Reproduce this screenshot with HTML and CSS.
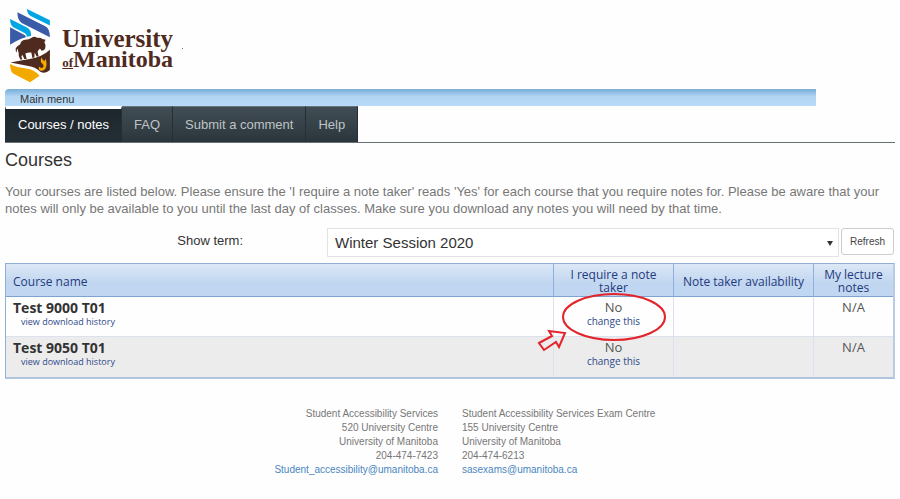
FILE: index.html
```html
<!DOCTYPE html>
<html lang="en">
<head>
    <meta charset="UTF-8">
    <meta name="viewport" content="width=device-width, initial-scale=1.0">
    <title>Courses</title>
    <link rel="stylesheet" href="styles.css">
</head>
<body>
<header class="site-header">
    <svg class="crest" viewBox="28 24 126 226" aria-hidden="true">
        <path fill="#00a5e3" d="M82 27 L151 61 V77 L93 48 Q82 42 82 27Z M31 57 L82 83 Q96 91 94 108 L81 111 Q82 104 76 100 L41 82 Q31 75 31 57Z"/>
        <path fill="#3a5ba8" d="M53 37 L137 79 Q151 86 151 112 L66 69 Q53 61 53 37Z M31 82 L76 106 Q80 109 77 113 Q56 118 31 135Z"/>
        <path fill="#4f2a1e" d="M62 179 Q55 168 57 160 L53 146 Q50 152 52 158 Q46 154 48 145 Q53 137 61 134 Q65 121 76 120 Q88 120 96 114 Q104 108 112 114 Q121 112 130 118 L137 119 V124 L134 126 Q139 134 137 145 Q133 154 126 153 L121 146 Q115 151 114 156 L117 170 H111 L105 158 L104 174 H98 L95 158 Q84 157 77 161 L81 178 H74 L68 165 L65 171 L68 179Z"/>
        <path fill="#4f2a1e" d="M32 188 Q59 184 90 178 Q127 172 151 150 V211 Q137 224 122 216 Q109 203 86 199 Q60 193 32 188Z"/>
        <path fill="#f2a900" d="M31 193 Q52 204 79 206 Q104 209 120 228 L91 248 L40 221 Q31 215 31 193Z M126 173 Q130 185 136 182 L138 176 Q144 195 138 206 Q131 216 121 212 Q115 209 119 200 Q126 208 131 202 Q134 197 126 190 Q121 183 126 173Z"/>
    </svg>
    <div class="wordmark">
        <span class="wordmark-top">University</span>
        <span><small>of</small>Manitoba</span>
    </div>
    <span class="dot"></span>
</header>

<div class="menu-bar">Main menu</div>
<nav class="tabs">
    <a href="#" class="active">Courses / notes</a>
    <a href="#">FAQ</a>
    <a href="#">Submit a comment</a>
    <a href="#">Help</a>
</nav>

<main>
    <h1>Courses</h1>
    <p class="intro">Your courses are listed below. Please ensure the 'I require a note taker' reads 'Yes' for each course that you require notes for. Please be aware that your notes will only be available to you until the last day of classes. Make sure you download any notes you will need by that time.</p>

    <form class="term-form">
        <label for="term">Show term:</label>
        <div class="select-wrap">
            <select id="term" name="term">
                <option>Winter Session 2020</option>
            </select>
        </div>
        <button type="button">Refresh</button>
    </form>

    <table class="courses">
        <colgroup>
            <col>
            <col class="col-taker">
            <col class="col-availability">
            <col class="col-notes">
        </colgroup>
        <thead>
            <tr>
                <th>Course name</th>
                <th>I require a note taker</th>
                <th>Note taker availability</th>
                <th>My lecture notes</th>
            </tr>
        </thead>
        <tbody>
            <tr>
                <td><strong>Test 9000 T01</strong><a href="#" class="history">view download history</a></td>
                <td class="marked">
                    No<a href="#">change this</a>
                    <svg class="callout" width="132" height="62" viewBox="0 0 132 62" aria-hidden="true">
                        <ellipse cx="77" cy="26" rx="51" ry="23"/>
                        <path d="M2 52 L15 45 L12 40 L28 42 L22 56 L19 51 L7 59Z"/>
                    </svg>
                </td>
                <td></td>
                <td>N/A</td>
            </tr>
            <tr>
                <td><strong>Test 9050 T01</strong><a href="#" class="history">view download history</a></td>
                <td>No<a href="#">change this</a></td>
                <td></td>
                <td>N/A</td>
            </tr>
        </tbody>
    </table>
</main>

<footer class="contacts">
    <address>
        Student Accessibility Services<br>
        520 University Centre<br>
        University of Manitoba<br>
        204-474-7423<br>
        <a href="#">Student_accessibility@umanitoba.ca</a>
    </address>
    <address>
        Student Accessibility Services Exam Centre<br>
        155 University Centre<br>
        University of Manitoba<br>
        204-474-6213<br>
        <a href="#">sasexams@umanitoba.ca</a>
    </address>
</footer>
</body>
</html>
```
FILE: styles.css
```css
* {
    box-sizing: border-box;
}

body {
    margin: 0;
    padding: 0 5px;
    background-color: #fefefe;
    color: #333;
    font-family: "Liberation Sans", Arial, sans-serif;
    font-size: 13px;
}

a {
    text-decoration: none;
}

/* Header */
.site-header {
    display: flex;
    padding: 8px 4px 6px;
}

.crest {
    width: 42px;
    height: 75px;
}

.wordmark {
    display: flex;
    flex-direction: column;
    align-items: flex-end;
    margin: 20px 9px 0 11px;
    color: #4f2a1e;
    font-family: "Liberation Serif", "Times New Roman", serif;
    font-size: 24px;
    font-weight: bold;
    line-height: 21px;
}

.wordmark-top {
    font-size: 25px;
}

.wordmark small {
    font-size: 13px;
    text-decoration: underline;
}

.dot {
    width: 1px;
    height: 1px;
    margin-top: 40px;
    background-color: #337ab7;
}

/* Main menu */
.menu-bar {
    margin-right: 79px;
    padding: 4px 15px 0;
    height: 17px;
    border-top-left-radius: 4px;
    background: linear-gradient(#78add6, #b2d5f4 45%, #b8daf8);
    font-size: 11px;
    line-height: 13px;
}

.tabs {
    display: flex;
    border-bottom: 1px solid #66716f;
}

.tabs a {
    padding: 2px 12px;
    border-top: 1px solid #66757c;
    border-right: 1px solid #243036;
    background: linear-gradient(#414d54, #2b363c);
    color: #bfc4c7;
    line-height: 31px;
}

.tabs .active {
    padding-top: 0;
    border-top: 3px solid #fff;
    border-left: 1px solid #243036;
    background: linear-gradient(#1d262c, #242f35);
    color: #fff;
}

/* Content */
h1 {
    margin: 7px 0 12px;
    font-size: 18px;
    font-weight: normal;
    line-height: 21px;
}

.intro {
    margin: 0 0 11px;
    color: #777;
    line-height: 17px;
}

.term-form {
    display: flex;
    align-items: flex-start;
    gap: 2px;
    margin-bottom: 6px;
    padding-right: 1px;
}

.term-form label {
    width: 36%;
    padding: 4px 82px 0 0;
    text-align: right;
    line-height: 17px;
}

.select-wrap {
    position: relative;
    flex: 1;
}

/* dropdown arrow */
.select-wrap::after {
    content: "";
    position: absolute;
    top: 13px;
    right: 6px;
    border: 3px solid transparent;
    border-top: 5px solid #333;
    border-bottom: 0;
    pointer-events: none;
}

select {
    display: block;
    width: 100%;
    height: 29px;
    padding: 0 7px;
    border: 1px solid #e3e3e3;
    background-color: #fff;
    color: #333;
    font-family: inherit;
    font-size: 15px;
    appearance: none;
}

button {
    height: 27px;
    padding: 0 8px;
    border: 1px solid #ccc;
    border-radius: 3px;
    background-color: #fff;
    color: #444;
    font-family: inherit;
    font-size: 10px;
}

/* Course table */
.courses {
    width: 100%;
    table-layout: fixed;
    border: 1px solid #8fafd6;
    border-right: 2px solid #b8cbe3;
    border-bottom: 2px solid #b0c4e0;
    border-collapse: separate;
    border-spacing: 0;
    font-family: "Open Sans", "Noto Sans", sans-serif;
}

.col-taker {
    width: 120px;
}

.col-availability {
    width: 140px;
}

.col-notes {
    width: 79px;
}

.courses th {
    height: 33px;
    padding: 2px 7px 0;
    border-right: 1px solid #8fb0da;
    border-bottom: 1px solid #7fa3d0;
    background: linear-gradient(#dce8f6, #c1d6f0 60%, #c1d6f0);
    color: #1f3a7d;
    font-size: 12px;
    font-weight: normal;
    line-height: 13px;
}

.courses td {
    height: 40px;
    padding: 3px 7px 0;
    border-right: 1px solid #dbe1ee;
    border-bottom: 1px solid #dbe1ee;
    color: #555;
    font-size: 13px;
    line-height: 15px;
    text-align: center;
    vertical-align: top;
}

.courses th:first-child,
.courses td:first-child {
    text-align: left;
}

.courses th:last-child,
.courses td:last-child {
    border-right: 0;
}

.courses tr:last-child td {
    border-bottom: 0;
}

.courses tbody tr:nth-child(even) {
    background-color: #ececec;
}

.courses strong {
    display: block;
    color: #333;
    font-size: 14px;
}

.courses a {
    display: block;
    color: #2f4a8a;
    font-size: 10px;
    line-height: 13px;
}

.courses .history {
    padding-left: 8px;
    font-size: 9px;
}

.courses .marked {
    position: relative;
}

.callout {
    position: absolute;
    top: -6px;
    left: calc(50% - 77px);
    fill: none;
    stroke: #e3242b;
    stroke-width: 2;
    pointer-events: none;
}

/* Footer */
.contacts {
    display: grid;
    grid-template-columns: 1fr 1fr;
    gap: 24px;
    margin-top: 28px;
    color: #777;
    font-size: 10px;
    line-height: 14px;
}

.contacts address {
    font-style: normal;
}

.contacts address:first-child {
    text-align: right;
}

.contacts a {
    color: #4a86bf;
}
```
